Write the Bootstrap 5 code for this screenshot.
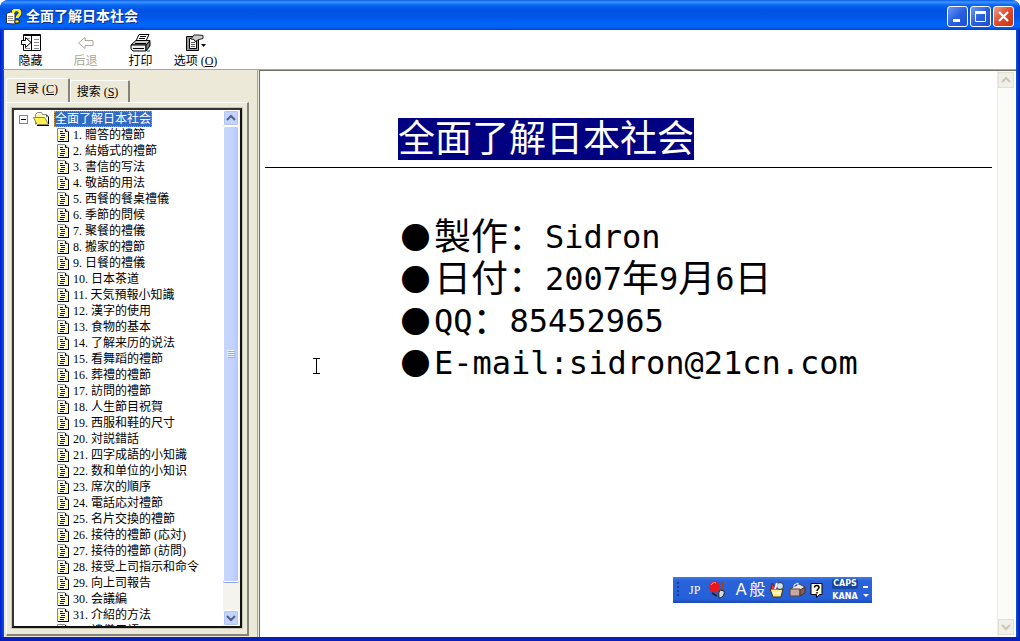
<!DOCTYPE html>
<html lang="zh-Hans">
<head>
<meta charset="utf-8">
<meta name="viewport" content="width=device-width, initial-scale=1">
<title>全面了解日本社会</title>
<link href="https://cdn.jsdelivr.net/npm/bootstrap@5.3.0/dist/css/bootstrap.min.css" rel="stylesheet">
<style>
  :root { --face: #ece9d8; --edge: #716f64; --shade: #aca899; }
  body { font: 12px/16px "Liberation Serif", "Noto Sans CJK SC", serif; color: #000; background: #fff; }
  button { font: inherit; color: inherit; background: none; border: 0; padding: 0; }
  svg { display: block; flex: none; }
  .app-window { height: 100vh; min-height: 400px; border-radius: 8px 8px 0 0; padding: 0 4px 4px; background: linear-gradient(90deg, #0019cf, #0855dd 4px, #0855dd calc(100% - 4px), #0019a0); box-shadow: inset 0 -4px #0a1fb8; }
  .title-bar { height: 30px; flex: none; margin: 0 -4px; padding: 3px 6px 0 6px; border-radius: 8px 8px 0 0; background: linear-gradient(#0a5be8 0, #3d95ff 2px, #0968f5 5px, #0054e3 9px, #0056e8 17px, #0066ff 25px, #0061f4 27px, #003fd0 30px); }
  .title-text { font-size: 14px; line-height: 20px; font-weight: 700; color: #fff; text-shadow: 1px 1px #0a2f8c; }
  .win-btns { gap: 2px; }
  .win-btn { width: 21px; height: 21px; border: 1px solid #fff; border-radius: 3px; background: linear-gradient(135deg, #6d9bf5, #2a5fe0 50%, #1d4fd0); display: grid; place-items: center; }
  .win-close { background: linear-gradient(135deg, #f0a088, #e0492a 50%, #c8340f); }
  .tool-strip { height: 40px; margin-left: -1px; border-bottom: 1px solid var(--shade); border-left: 1px solid #0855dd; background: #fff; }
  .tool-btn { width: 55px; padding: 4px 2px 0 0; display: flex; flex-direction: column; align-items: center; gap: 1px; white-space: nowrap; }
  .tool-btn:disabled { color: #aca899; }
  .work-area { background: var(--face); }
  .side-pane { width: 254px; background: var(--face); padding: 8px 8px 1px 2px; border-right: 1px solid var(--shade); }
  .tab-btn { border-top: 1px solid #fff; border-left: 1px solid #fff; border-right: 2px solid #85827a; border-radius: 2px 2px 0 0; }
  .tab-on { width: 64px; height: 25px; padding: 2px 2px 0 0; }
  .tab-off { width: 60px; height: 23px; padding: 0 4px 0 0; }
  .tab-panel { border: solid; border-width: 1px 2px 2px 1px; border-color: #fff #85827a #85827a #fff; padding: 5px 5px 6px 5px; margin-top: -1px; }
  .tree-box { border: 2px solid #222; border-color: #333 #111 #111 #333; background: #fff; outline: 1px solid #c8c5b4; }
  .tree-list { padding: 1px 0 0 1px; }
  .tree-box a { color: #000; text-decoration: none; white-space: nowrap; }
  .tree-row { height: 16px; display: flex; align-items: center; }
  .tree-row .root-link { background: #316ac5; color: #fff; outline: 1px dotted #d69a3a; outline-offset: -1px; padding: 0 1px; line-height: 16px; }
  .leaf { padding-left: 42px; gap: 4px; }
  .expander { width: 9px; height: 9px; border: 1px solid #848284; background: #fff; display: grid; place-items: center; }
  .scroll-track { width: 17px; padding-right: 1px; background: #f4f3ee; }
  .scroll-btn { height: 16px; border: 1px solid #fff; border-radius: 2px; background: #c3d3fd; color: #4d6185; box-shadow: inset 0 0 0 1px #b2c5f5; display: grid; place-items: center; }
  .scroll-thumb { flex: 454 1 0; border: 1px solid #fff; border-radius: 2px; background: linear-gradient(90deg, #c8d6fb, #c3d3fd 60%, #b5c8f8); box-shadow: 0 1px #8ba7e0; display: grid; place-items: center; }
  .scroll-rest { flex: 28 1 0; }
  .doc-pane { background: #fff; border-top: 1px solid var(--edge); border-left: 1px solid var(--edge); margin-left: 1px; padding-right: 2px; }
  .page-track { width: 17px; background: #fbfbf8; border-left: 1px solid #eeede5; padding: 1px 0 2px; }
  .page-btn { width: 16px; height: 16px; background: #f0efe8; border: 1px solid #e2e0d4; color: #c9c7ba; display: grid; place-items: center; }
  .doc-body { font: 37px/42px "Noto Sans CJK SC", sans-serif; padding: 47px 5px 0; }
  .doc-title { font: inherit; margin: 0 0 0 133px; height: 42px; display: flex; }
  .doc-title span { height: 42px; line-height: 36px; background: #000080; color: #fff; }
  .doc-rule { height: 1px; background: #000; margin: 7px 0 45px; }
  .doc-facts { margin: 0 0 0 132px; padding: 0; list-style: none; white-space: nowrap; }
  .doc-facts li { height: 42px; display: flex; align-items: center; }
  .dot { width: 37px; padding-top: 4px; text-align: center; font-size: 30px; line-height: 36px; }
  .half { padding-top: 6px; font: 32px/36px "DejaVu Sans Mono", monospace; }
  .ime-bar { position: absolute; right: 148px; bottom: 38px; width: 199px; height: 26px; background: linear-gradient(#3c7be8, #2a62d8 4px, #2660d8 22px, #1c48b0); color: #fff; padding: 0 3px; }
  .ime-tiny { font: 700 8px/10px "DejaVu Sans", sans-serif; gap: 3px; }
  .caps-on { background: #17479e; border-radius: 2px; }
  .text-cursor { position: absolute; left: 312px; top: 357px; }
</style>
</head>
<body>
<svg width="0" height="0" class="position-absolute" aria-hidden="true">
  <symbol id="page" viewBox="0 0 12 14">
    <path d="M.5 13.500V.5H8l3.500 3.500v9.500z" fill="#fffff0" stroke="#888"/>
    <path d="M2 2h1v1H2zM1 5h1v1H1zM1 8h1v1H1zM2 11h1v1H2zM5 1h1v1H5zM9 5h1v1H9zM9 8h1v1H9zM6 12h1v1H6zM9 11h1v1H9zM7 3h1v1H7z" fill="#fff000"/>
    <path d="M11.500 3.500V13.500H1M8.500 1v2.500h2" fill="none" stroke="#000"/>
    <path d="M3 3.500h3M3 5.500h5M4 7.500h4M3 9.500h5M3 11.500h4" stroke="#0000f0"/>
  </symbol>
  <symbol id="up" viewBox="0 0 10 8"><path d="M1 6l4-4 4 4" fill="none" stroke="currentColor" stroke-width="2"/></symbol>
  <symbol id="down" viewBox="0 0 10 8"><path d="M1 2l4 4 4-4" fill="none" stroke="currentColor" stroke-width="2"/></symbol>
</svg>

<div class="app-window d-flex flex-column position-relative overflow-hidden">
  <header class="title-bar d-flex align-items-center gap-1">
    <svg width="16" height="16" viewBox="0 0 16 16">
      <path d="M.5 4.500L6 2.500l3 2V15l-8.500-.5z" fill="#fff" stroke="#333"/>
      <path d="M2 7.500h5M2 9.500h5M2 11.500h6" stroke="#888"/>
      <path d="M7 4c0-4 7-4.500 7 0 0 2.500-3 2.500-3 5" fill="none" stroke="#000" stroke-width="4"/>
      <path d="M7 4c0-4 7-4.500 7 0 0 2.500-3 2.500-3 5" fill="none" stroke="#ffee20" stroke-width="3"/>
      <path d="M9 11h4v3H9z" fill="#ffee20" stroke="#000" stroke-width=".7"/>
    </svg>
    <span class="title-text flex-grow-1">全面了解日本社会</span>
    <div class="win-btns d-flex">
      <button class="win-btn" aria-label="最小化"><svg width="15" height="15"><path d="M3 10h7v3H3z" fill="#fff"/></svg></button>
      <button class="win-btn" aria-label="最大化"><svg width="15" height="15"><path d="M2.500 3v9.500h10V3" fill="none" stroke="#fff"/><path d="M2 2h11v3H2z" fill="#fff"/></svg></button>
      <button class="win-btn win-close" aria-label="关闭"><svg width="15" height="15"><path d="M3 3l9 9M12 3l-9 9" stroke="#fff" stroke-width="2.200"/></svg></button>
    </div>
  </header>

  <nav class="tool-strip d-flex flex-shrink-0" aria-label="工具栏">
    <button class="tool-btn">
      <svg width="20" height="18" viewBox="0 0 20 18"><path d="M2.500 .5h17v16h-17z" fill="#fff" stroke="#000"/><path d="M2 1.500h18" stroke="#000"/><path d="M10.500 2v14" stroke="#000"/><path d="M13 5.500h5M13 8.500h5M13 11.500h5M13 14.500h5" stroke="#888"/><path d="M4 4.500h5M4 14.500h5" stroke="#999"/><path d="M.5 6.500h4v-3l5.500 5-5.500 5v-3h-4z" fill="#fff" stroke="#000"/></svg>
      <span>隐藏</span>
    </button>
    <button class="tool-btn" disabled>
      <svg width="20" height="18" viewBox="0 0 20 18"><path d="M2.500 9L9 3.500v3h8v5H9v3z" fill="#fff" stroke="#aca899"/></svg>
      <span>后退</span>
    </button>
    <button class="tool-btn">
      <svg width="21" height="18" viewBox="0 0 21 18"><path d="M6 7L9 .5h10L16 7z" fill="#fff" stroke="#000"/><path d="M10 2.500h6M9 4.500h6" stroke="#000"/><path d="M1 11l5-4.500h14L16 11z" fill="#ccc" stroke="#000"/><path d="M1 11h15v6H3l-2-2z" fill="#eee" stroke="#000"/><path d="M16 11l4-4v5l-4 5z" fill="#777" stroke="#000"/><path d="M3 14.500h11M5 9.500h11" stroke="#000"/><path d="M17 16h3v2h-3z" fill="#36c9c9"/></svg>
      <span>打印</span>
    </button>
    <button class="tool-btn">
      <svg width="20" height="18" viewBox="0 0 20 18"><path d="M.5 2.500h12v14H.5z" fill="#999" stroke="#000"/><path d="M3.500 4.500h7v10h-7z" fill="#fff" stroke="#000"/><path d="M5 8.500h4M5 10.500h4M5 12.500h4" stroke="#555"/><path d="M5 5l3-4h5l4 .5v3l-4 1-4 2-1-2z" fill="#ccc" stroke="#222"/><path d="M15 10h5l-2.500 3z"/></svg>
      <span>选项 (<u>O</u>)</span>
    </button>
  </nav>

  <main class="work-area d-flex flex-grow-1 overflow-hidden">
    <aside class="side-pane d-flex flex-column flex-shrink-0">
      <div class="d-flex align-items-end" role="tablist">
        <button class="tab-btn tab-on d-flex justify-content-center" role="tab" aria-selected="true"><span>目录 (<u>C</u>)</span></button>
        <button class="tab-btn tab-off" role="tab" aria-selected="false">搜索 (<u>S</u>)</button>
      </div>
      <div class="tab-panel flex-grow-1 d-flex overflow-hidden">
        <div class="tree-box flex-grow-1 d-flex overflow-hidden">
          <div class="tree-list flex-grow-1 overflow-hidden">
            <div class="tree-row">
              <button class="expander ms-1" aria-label="折叠"><svg width="5" height="1"><path d="M0 .5h5" stroke="#000"/></svg></button>
              <svg class="mx-1" width="18" height="16" viewBox="0 0 18 16"><path d="M3.500 13.500v-10l2-2h4l1 2h4v3" fill="#fff9b0" stroke="#888"/><path d="M1.500 6.500h11l4 7H5z" fill="#fff04a" stroke="#8a8a60"/><path d="M5 14.500h12M16.500 13V6l-2-2" fill="none" stroke="#000"/></svg>
              <a href="#" class="root-link">全面了解日本社会</a>
            </div>
            <ul class="list-unstyled m-0" id="topics"></ul>
          </div>
          <div class="scroll-track d-flex flex-column flex-shrink-0">
            <button class="scroll-btn" aria-label="向上滚动"><svg width="10" height="8"><use href="#up"/></svg></button>
            <div class="scroll-thumb"><svg width="8" height="8"><path d="M0 .5h7M0 2.500h7M0 4.500h7M0 6.500h7" stroke="#eef4fe"/><path d="M1 1.500h7M1 3.500h7M1 5.500h7M1 7.500h7" stroke="#8cb0f8"/></svg></div>
            <div class="scroll-rest"></div>
            <button class="scroll-btn" aria-label="向下滚动"><svg width="10" height="8"><use href="#down"/></svg></button>
          </div>
        </div>
      </div>
    </aside>

    <section class="doc-pane flex-grow-1 d-flex overflow-hidden">
      <article class="doc-body flex-grow-1 overflow-hidden">
        <h1 class="doc-title"><span>全面了解日本社会</span></h1>
        <div class="doc-rule"></div>
        <ul class="doc-facts">
          <li><span class="dot">●</span>製作：<span class="half">Sidron</span></li>
          <li><span class="dot">●</span>日付：<span class="half">2007</span>年<span class="half">9</span>月<span class="half">6</span>日</li>
          <li><span class="dot">●</span><span class="half">QQ</span>：<span class="half">85452965</span></li>
          <li><span class="dot">●</span><span class="half">E-mail:sidron@21cn.com</span></li>
        </ul>
      </article>
      <div class="page-track d-flex flex-column justify-content-between flex-shrink-0">
        <button class="page-btn" aria-label="向上滚动" disabled><svg width="10" height="8"><use href="#up"/></svg></button>
        <button class="page-btn" aria-label="向下滚动" disabled><svg width="10" height="8"><use href="#down"/></svg></button>
      </div>
    </section>
  </main>

  <svg class="text-cursor" width="9" height="18"><path d="M1 1.500h7M1 16.500h7M4.500 1v16" stroke="#000"/></svg>

  <div class="ime-bar d-flex align-items-center">
    <svg width="5" height="18"><path d="M1 1h2v2H1zM1 5h2v2H1zM1 9h2v2H1zM1 13h2v2H1z" fill="#123f9c"/></svg>
    <button class="ms-2">JP</button>
    <button class="ms-2" aria-label="输入法"><svg width="17" height="18" viewBox="0 0 17 18"><circle cx="6.500" cy="6" r="5.500" fill="#e81818"/><path d="M3 4c1-2 3-3 5-2" stroke="#ff9a9a" fill="none"/><path d="M14.500 1v9" stroke="#a0401a" stroke-width="2"/><path d="M12 9l4 1c1 4-2 7-5 7 0-3-1-5 1-8z" fill="#ddd" stroke="#222"/><path d="M4 12l5 3" stroke="#222" stroke-width="2"/></svg></button>
    <button class="ms-2 fs-6 text-nowrap">Ａ般</button>
    <button class="ms-1" aria-label="工具"><svg width="16" height="18" viewBox="0 0 16 18"><path d="M1 8h13l-2 8H4z" fill="#ffe98a" stroke="#332"/><path d="M2 8l1-6 4 6" fill="#e33" stroke="#622"/><circle cx="11" cy="5" r="3.500" fill="#cfe6ee" stroke="#333"/><path d="M6 8l2-6" stroke="#fff" stroke-width="2"/><path d="M4 12h8" stroke="#fff"/></svg></button>
    <button class="ms-1" aria-label="工具箱"><svg width="17" height="16" viewBox="0 0 17 16"><path d="M1 7l9-5 6 3-5 4z" fill="#f0e6e2" stroke="#443"/><path d="M1 7h10v7H1z" fill="#c8a8a4" stroke="#543"/><path d="M11 8l5-3v6l-5 3z" fill="#875c5c" stroke="#432"/><path d="M5 6V3l4-2v3" fill="none" stroke="#fff"/></svg></button>
    <button class="ms-1" aria-label="帮助"><svg width="14" height="15" viewBox="0 0 13 15"><path d="M.5 .5h11v11H9l-3 3v-3H.5z" fill="#fffbd8" stroke="#000"/><path d="M4 4.500c0-3 4.500-2.500 4.500 0C8.500 6 6.500 6 6.500 8M6.500 9v1.500" fill="none" stroke="#000" stroke-width="1.500"/></svg></button>
    <div class="d-flex flex-column ms-2 ime-tiny">
      <button class="caps-on">CAPS</button>
      <button>KANA</button>
    </div>
    <svg class="ms-1" width="8" height="20"><path d="M1 6h5v2H1zM1 14h6l-3 3z" fill="#fff"/></svg>
  </div>
</div>

<script>
  const topics = ["贈答的禮節", "結婚式的禮節", "書信的写法", "敬語的用法", "西餐的餐桌禮儀", "季節的問候", "聚餐的禮儀",
    "搬家的禮節", "日餐的禮儀", "日本茶道", "天気預報小知識", "漢字的使用", "食物的基本", "了解来历的说法", "看舞蹈的禮節",
    "葬禮的禮節", "訪問的禮節", "人生節目祝賀", "西服和鞋的尺寸", "対説錯話", "四字成語的小知識", "数和单位的小知识",
    "席次的順序", "電話応対禮節", "名片交換的禮節", "接待的禮節 (応対)", "接待的禮節 (訪問)", "接受上司指示和命令",
    "向上司報告", "会議編", "介紹的方法", "禮儀用語"];
  document.getElementById("topics").innerHTML = topics.map((t, i) =>
    `<li class="tree-row leaf"><svg width="12" height="14"><use href="#page"/></svg><a href="#">${i + 1}. ${t}</a></li>`).join("");
</script>
<script src="https://cdn.jsdelivr.net/npm/bootstrap@5.3.0/dist/js/bootstrap.bundle.min.js"></script>
</body>
</html>
